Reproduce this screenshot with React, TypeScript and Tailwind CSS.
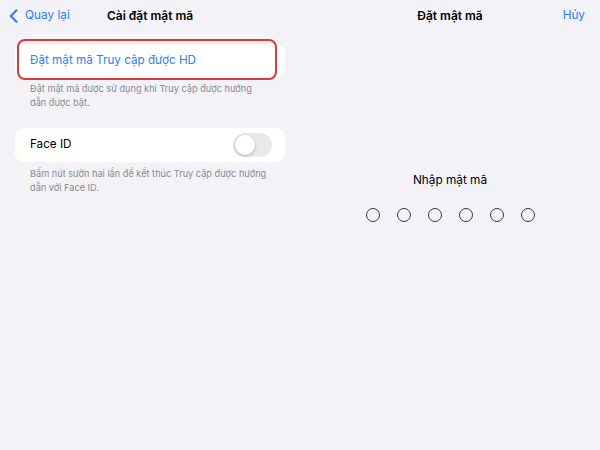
import React from 'react';

const font = { fontFamily: 'Inter, "Noto Sans", sans-serif' };

function BackChevron() {
  return (
    <svg width="9" height="14" viewBox="0 0 9 14" fill="none">
      <path d="M7.5 1.2 L1.8 7 L7.5 12.8" stroke="#2f7cf6" strokeWidth="2" strokeLinecap="round" strokeLinejoin="round" />
    </svg>
  );
}

export default function App() {
  return (
    <div className="w-[600px] h-[450px] flex bg-[#f2f2f7] text-black" style={font}>
      {/* Left pane: settings */}
      <div className="w-[300px] flex flex-col">
        <header className="h-[32px] grid grid-cols-[1fr_auto_1fr] items-center">
          <div className="flex items-center gap-[7px] pl-[9px] text-[11.8px] text-[#2f7cf6]">
            <BackChevron />
            <span>Quay lại</span>
          </div>
          <h1 className="text-[12px] font-semibold">Cài đặt mật mã</h1>
          <div />
        </header>

        <div className="px-[15px] pt-[12px]">
          <div className="relative h-[34px] bg-white rounded-[9px] flex items-center px-[15px]">
            <span className="text-[11.7px] text-[#2f7cf6]">Đặt mật mã Truy cập được HD</span>
            <div className="absolute left-[2px] top-[-5px] w-[260px] h-[41px] border-2 border-[#e2363c] rounded-[8px]" />
          </div>
          <p className="mt-[4px] px-[15px] text-[9.2px] leading-[14px] text-[#8a8a8e] whitespace-nowrap">
            Đặt mật mã được sử dụng khi Truy cập được hướng
            <br />
            dẫn được bật.
          </p>

          <div className="mt-[18px] h-[34px] bg-white rounded-[9px] flex items-center justify-between pl-[15px] pr-[13px]">
            <span className="text-[11.7px]">Face ID</span>
            <div className="w-[39px] h-[24px] rounded-full bg-[#e9e9eb] p-[2px] flex items-center">
              <div className="w-[20px] h-[20px] rounded-full bg-white shadow-[0_1px_3px_rgba(0,0,0,0.25)]" />
            </div>
          </div>
          <p className="mt-[5px] px-[15px] text-[9.2px] leading-[14px] text-[#8a8a8e] whitespace-nowrap">
            Bấm nút sườn hai lần để kết thúc Truy cập được hướng
            <br />
            dẫn với Face ID.
          </p>
        </div>
      </div>

      {/* Right pane: passcode entry */}
      <div className="w-[300px] flex flex-col">
        <header className="h-[32px] grid grid-cols-[1fr_auto_1fr] items-center">
          <div />
          <h2 className="text-[12px] font-semibold">Đặt mật mã</h2>
          <div className="text-right pr-[15px] text-[11.8px] text-[#2f7cf6]">Hủy</div>
        </header>

        <div className="flex flex-col items-center pt-[140px]">
          <p className="text-[11.8px] leading-[16px]">Nhập mật mã</p>
          <div className="mt-[20px] flex gap-[17px]">
            {[0, 1, 2, 3, 4, 5].map((i) => (
              <div key={i} className="w-[14px] h-[14px] rounded-full border border-[#3a3a3c]" />
            ))}
          </div>
        </div>
      </div>
    </div>
  );
}
